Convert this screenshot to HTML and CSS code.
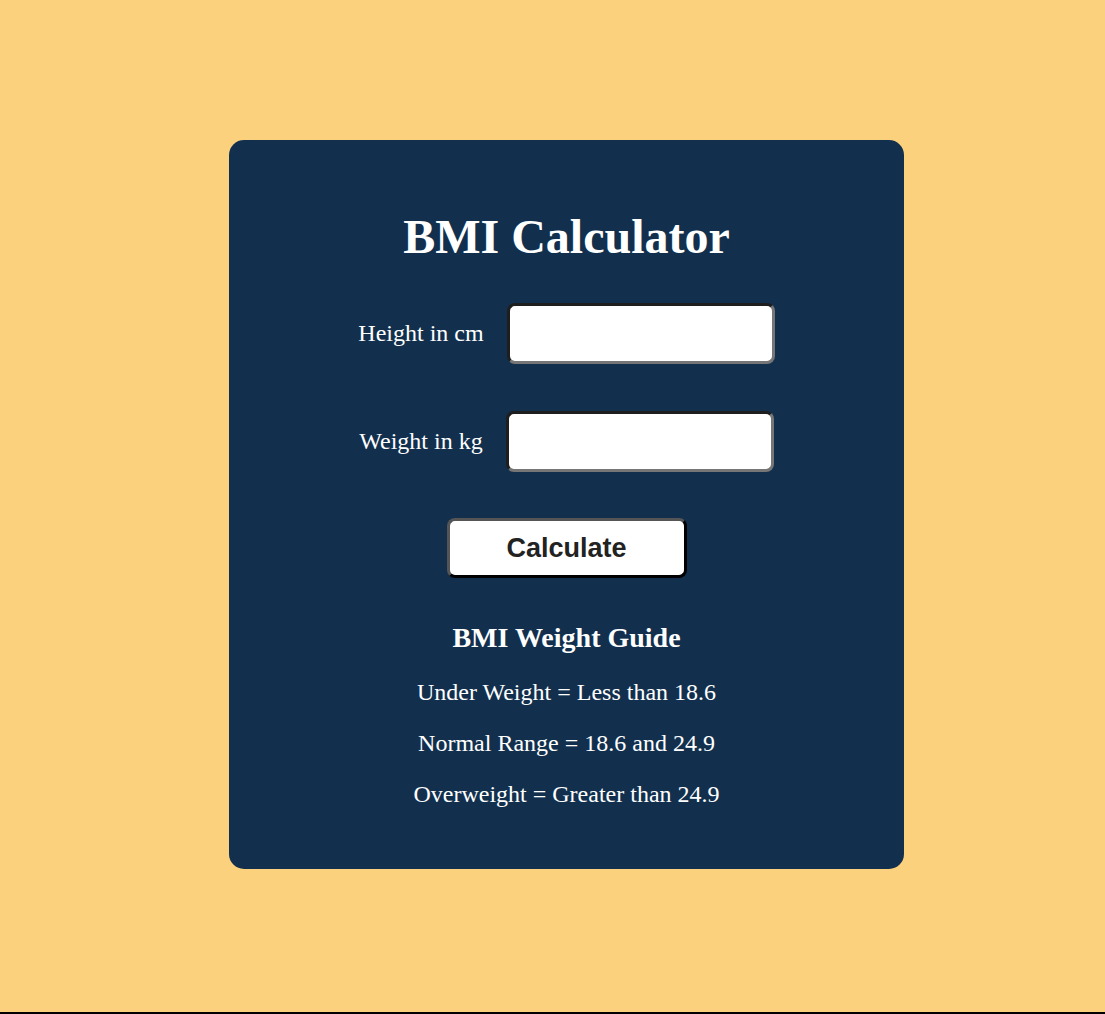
FILE: index.html
```html
<!DOCTYPE html>
<html>
<head>
<meta charset="utf-8">
<link rel="stylesheet" href="styles.css">
</head>
<body>
<main class="page">
  <div class="card">
    <h1 class="title">BMI Calculator</h1>
    <div class="row">
      <label class="label" for="h">Height in cm</label>
      <input class="field" id="h" type="text">
    </div>
    <div class="row">
      <label class="label" for="w">Weight in kg</label>
      <input class="field" id="w" type="text">
    </div>
    <button class="btn" type="button">Calculate</button>
    <h2 class="guide-title">BMI Weight Guide</h2>
    <p class="guide">Under Weight = Less than 18.6</p>
    <p class="guide">Normal Range = 18.6 and 24.9</p>
    <p class="guide">Overweight = Greater than 24.9</p>
  </div>
</main>
</body>
</html>
```
FILE: styles.css
```css
html, body {
  margin: 0;
  padding: 0;
}
body {
  background: #fcd17e;
  font-family: "Liberation Serif", "Times New Roman", serif;
  border-bottom: 2px solid #000;
}
.page {
  height: 1012px;
  display: flex;
  justify-content: center;
  align-items: center;
  padding-left: 28px;
  padding-bottom: 3px;
  box-sizing: border-box;
}
.card {
  width: 675px;
  height: 729px;
  flex-shrink: 0;
  box-sizing: border-box;
  background: #12304e;
  border-radius: 15px;
  color: #fff;
  display: flex;
  flex-direction: column;
  align-items: center;
  padding-top: 69px;
}
.title {
  margin: 0;
  font-size: 48px;
  font-weight: bold;
  line-height: 56px;
}
.row {
  display: flex;
  align-items: center;
  gap: 23px;
  margin-top: 38px;
}
.row + .row {
  margin-top: 47px;
}
.label {
  font-size: 24px;
}
.field {
  width: 268px;
  height: 61px;
  flex-shrink: 0;
  box-sizing: border-box;
  border: 3px solid;
  border-color: #1e1e1e #767676 #767676 #1e1e1e;
  border-radius: 8px;
  background: #fff;
  padding: 0 8px;
}
.btn {
  margin-top: 46px;
  width: 240px;
  height: 60px;
  box-sizing: border-box;
  background: #fff;
  border: 3px solid;
  border-color: #555 #000 #000 #555;
  border-radius: 8px;
  font-family: "Liberation Sans", Arial, sans-serif;
  font-weight: bold;
  font-size: 27px;
  color: #222;
  padding: 0;
}
.guide-title {
  margin: 45px 0 0;
  font-size: 28px;
  line-height: 30px;
}
.guide {
  margin: 21px 0 0;
  font-size: 24px;
  line-height: 30px;
}
.guide-title + .guide {
  margin-top: 24px;
}
```
